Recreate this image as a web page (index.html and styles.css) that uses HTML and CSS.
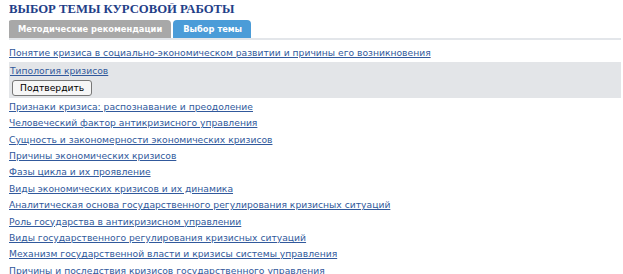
FILE: index.html
```html
<!DOCTYPE html>
<html lang="ru">
<head>
  <title>Выбор темы курсовой работы</title>
  <meta charset="UTF-8"/>
  <link rel="stylesheet" href="styles.css">
</head>
<body>
<h1>Выбор темы курсовой работы</h1>

<div class="tabs">
  <span class="tab">Методические рекомендации</span>
  <span class="tab active">Выбор темы</span>
</div>

<ul class="topics">
  <li><a href="#">Понятие кризиса в социально-экономическом развитии и причины его возникновения</a></li>
  <li class="selected">
    <a href="#">Типология кризисов</a>
    <button type="button">Подтвердить</button>
  </li>
  <li><a href="#">Признаки кризиса: распознавание и преодоление</a></li>
  <li><a href="#">Человеческий фактор антикризисного управления</a></li>
  <li><a href="#">Сущность и закономерности экономических кризисов</a></li>
  <li><a href="#">Причины экономических кризисов</a></li>
  <li><a href="#">Фазы цикла и их проявление</a></li>
  <li><a href="#">Виды экономических кризисов и их динамика</a></li>
  <li><a href="#">Аналитическая основа государственного регулирования кризисных ситуаций</a></li>
  <li><a href="#">Роль государства в антикризисном управлении</a></li>
  <li><a href="#">Виды государственного регулирования кризисных ситуаций</a></li>
  <li><a href="#">Механизм государственной власти и кризисы системы управления</a></li>
  <li><a href="#">Причины и последствия кризисов государственного управления</a></li>
</ul>
</body>
</html>
```

FILE: styles.css
```css
body {
  margin: 3px 2px 0 9px;
  font-family: "DejaVu Sans", Verdana, sans-serif;
  font-size: 9.2px;
  background: #fff;
}

h1 {
  margin: 0;
  font-family: "Liberation Serif", "Times New Roman", serif;
  font-size: 12.7px;
  font-weight: bold;
  text-transform: uppercase;
  color: #1f4088;
  line-height: 13px;
}

.tabs {
  display: flex;
  gap: 2px;
  margin-top: 4px;
  border-bottom: 2px solid #e3e6ea;
}

.tab {
  padding: 0 9px 0 10px;
  height: 18px;
  line-height: 18px;
  border-radius: 4px 4px 0 0;
  background: #a8a8a8;
  color: #fff;
  font-weight: bold;
  font-size: 8.3px;
}

.tab:first-child {
  margin-left: -1px;
}

.tab.active {
  background: #4b9cd8;
}

.topics {
  list-style: none;
  margin: 0;
  padding: 5px 0 0;
}

.topics li {
  line-height: 16.4px;
  height: 16.4px;
}

.topics a {
  color: #31599c;
}

.topics li.selected {
  height: auto;
  background: #e3e5e8;
  padding: 1px 0 2px 1px;
  margin: 1px 0;
}

button {
  display: block;
  margin: 0 0 0 2px;
  padding: 1px 7px;
  font-family: "DejaVu Sans", Verdana, sans-serif;
  font-size: 9.2px;
  line-height: 12px;
  color: #000;
  background: #f6f6f6;
  border: 1px solid #777;
  border-radius: 3px;
}
```
